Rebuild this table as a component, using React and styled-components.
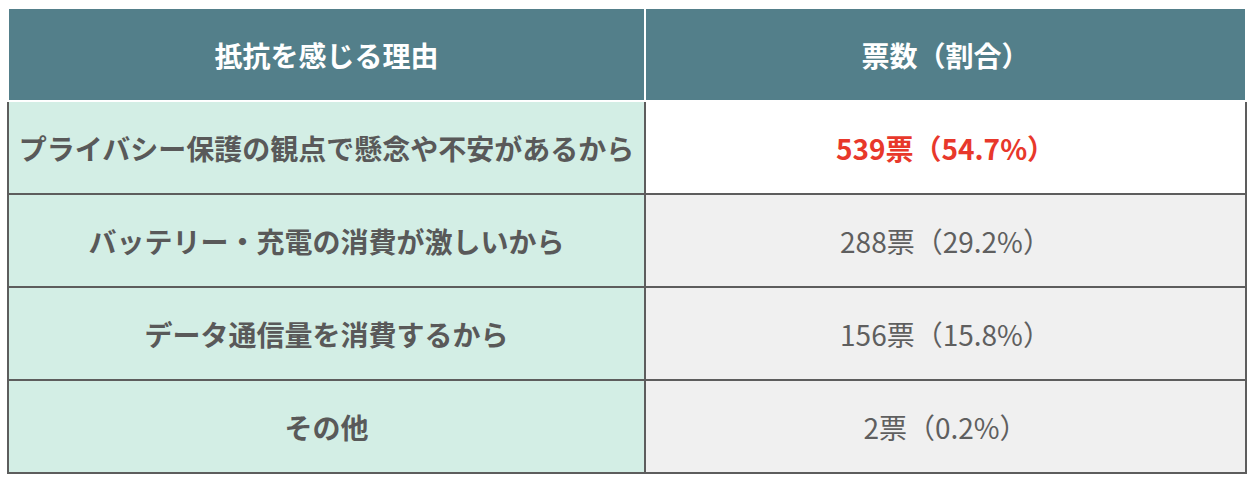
import React from "react";
import styled, { createGlobalStyle } from "styled-components";

const Global = createGlobalStyle`
  html, body { margin: 0; padding: 0; background: #ffffff; }
  body { font-family: "Noto Sans CJK JP", "Noto Sans", sans-serif; }
`;

const Wrap = styled.div`
  padding: 7px 0 0 7px;
`;

const Table = styled.div`
  display: flex;
  flex-direction: column;
  width: 1240px;
`;

const Row = styled.div`
  display: grid;
  grid-template-columns: 639px 601px;
`;

const HeadCell = styled.div`
  background: #537f8a;
  color: #ffffff;
  font-weight: 700;
  font-size: 28px;
  height: 91px;
  display: flex;
  align-items: center;
  justify-content: center;
  border-top: 2px solid #ffffff;
  border-bottom: 2px solid #ffffff;
  border-right: 2px solid #ffffff;
  border-left: ${(p) => (p.$first ? "2px solid #ffffff" : "none")};
`;

const LabelCell = styled.div`
  background: #d3eee5;
  color: #595959;
  font-weight: 700;
  font-size: 28px;
  height: 91px;
  display: flex;
  align-items: center;
  justify-content: center;
  border-left: 2px solid #5d5d5d;
  border-right: 2px solid #5d5d5d;
  border-bottom: 2px solid #5d5d5d;
`;

const ValueCell = styled.div`
  background: ${(p) => (p.$highlight ? "#ffffff" : "#f0f0f0")};
  color: ${(p) => (p.$highlight ? "#e8382b" : "#5f5f5f")};
  font-weight: ${(p) => (p.$highlight ? 700 : 400)};
  font-size: 28px;
  height: 91px;
  display: flex;
  align-items: center;
  justify-content: center;
  border-right: 2px solid #5d5d5d;
  border-bottom: 2px solid #5d5d5d;
`;

const rows = [
  { label: "プライバシー保護の観点で懸念や不安があるから", value: "539票（54.7%）", highlight: true },
  { label: "バッテリー・充電の消費が激しいから", value: "288票（29.2%）" },
  { label: "データ通信量を消費するから", value: "156票（15.8%）" },
  { label: "その他", value: "2票（0.2%）" },
];

export default function App() {
  return (
    <Wrap>
      <Global />
      <Table>
        <Row>
          <HeadCell $first>抵抗を感じる理由</HeadCell>
          <HeadCell>票数（割合）</HeadCell>
        </Row>
        {rows.map((r) => (
          <Row key={r.label}>
            <LabelCell>{r.label}</LabelCell>
            <ValueCell $highlight={r.highlight}>{r.value}</ValueCell>
          </Row>
        ))}
      </Table>
    </Wrap>
  );
}
